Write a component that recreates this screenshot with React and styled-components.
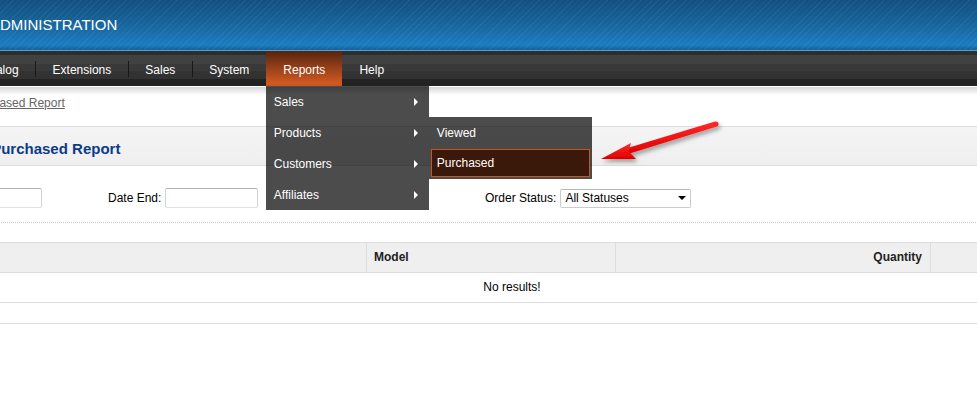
import React from "react";
import styled, { createGlobalStyle } from "styled-components";

const GlobalStyle = createGlobalStyle`
  html, body {
    margin: 0;
    padding: 0;
    background: #fff;
    overflow: hidden;
  }
  body {
    font-family: "Liberation Sans", Arial, sans-serif;
    font-size: 12px;
    color: #000;
  }
`;

const Screen = styled.div`
  position: relative;
  width: 977px;
  height: 399px;
  overflow: hidden;
`;

/* the admin page is wider than the window and scrolled a bit to the right */
const Page = styled.div`
  width: 1304px;
  margin-left: -140px;
`;

const Header = styled.header`
  height: 51px;
  padding: 0 0 1px 130px;
  box-sizing: border-box;
  display: flex;
  align-items: center;
  background:
    repeating-linear-gradient(135deg, rgba(255, 255, 255, 0.05) 0 1px, transparent 1px 4px),
    linear-gradient(to bottom, #13507f 0%, #166399 45%, #1a78b9 82%, #1a7cbf 90%, #135f98 100%);
  border-bottom: 1px solid #5c9dd0;
`;

const Logo = styled.div`
  color: #fff;
  font-size: 15px;
`;

const Menu = styled.ul`
  display: flex;
  margin: 0;
  padding: 0 0 0 8px;
  list-style: none;
  height: 35px;
  background: linear-gradient(
    to bottom,
    #2d2d2d 0,
    #2d2d2d 4px,
    #414141 4px,
    #414141 13px,
    #393939 13px,
    #393939 20px,
    #323232 20px,
    #323232 28px,
    #222 28px
  );
  border-bottom: 1px solid #fff;
`;

const MenuItem = styled.li`
  position: relative;
  display: flex;
  align-items: center;
  padding: 2px 16.5px 0;
  color: #fff;
  font-size: 12px;
  background: ${(p) =>
    p.$active
      ? "linear-gradient(to bottom, #55250b 0%, #7f3617 30%, #b04b1c 68%, #d15a21 92%, #c4541e 100%)"
      : "transparent"};

  & + & {
    padding-left: 17.5px;
  }
  & + &:not([data-active]) {
    background: linear-gradient(#181818, #181818) left 55% / 1px 16px no-repeat;
  }
`;

const Dropdown = styled.ul`
  position: absolute;
  top: 100%;
  left: 0;
  width: 163px;
  margin: 0;
  padding: 0;
  list-style: none;
  background: rgba(0, 0, 0, 0.7);
  z-index: 10;
`;

const DropItem = styled.li`
  position: relative;
  height: 31px;
  padding: 0 8px;
  box-sizing: border-box;
  display: flex;
  align-items: center;
  justify-content: space-between;
  color: #fff;
`;

const Caret = styled.span`
  width: 0;
  height: 0;
  margin-right: 3px;
  border-left: 4px solid #fff;
  border-top: 4px solid transparent;
  border-bottom: 4px solid transparent;
`;

const SubMenu = styled.ul`
  position: absolute;
  top: 0;
  left: 100%;
  width: 163px;
  margin: 0;
  padding: 0;
  list-style: none;
  background: rgba(0, 0, 0, 0.7);
`;

const SubItem = styled.li`
  display: flex;
  align-items: center;
  box-sizing: border-box;
  color: #fff;
  height: ${(p) => (p.$active ? "28px" : "31px")};
  margin: ${(p) => (p.$active ? "1px 2px 2px" : "0")};
  padding: ${(p) => (p.$active ? "0 5px" : "0 8px")};
  border: ${(p) => (p.$active ? "1px solid #c4571f" : "none")};
  background: ${(p) => (p.$active ? "#3b190a" : "transparent")};
`;

const Main = styled.div`
  padding: 0 10px;
  background: linear-gradient(to bottom, #d6d6d6 0, #fff 8px) no-repeat;
`;

const Breadcrumb = styled.div`
  padding: 9px 0 16px 2px;
  line-height: 14px;

  a {
    color: #666;
    text-decoration: underline;
  }
`;

const HeadingBox = styled.div`
  height: 40px;
  box-sizing: border-box;
  display: flex;
  align-items: center;
  padding: 4px 0 0 52px;
  border-top: 1px solid #dddddd;
  border-bottom: 1px solid #dddddd;
  background: linear-gradient(to bottom, #f4f4f4, #efefef);
`;

const Title = styled.h1`
  margin: 0;
  font-size: 15px;
  font-weight: bold;
  color: #0b3b89;
`;

const FilterRow = styled.div`
  display: grid;
  grid-template-columns: 220px 377px 1fr auto;
  align-items: center;
  padding: 22px 0 14px 18px;
  border-bottom: 1px dotted #cccccc;
`;

const Field = styled.label`
  display: flex;
  align-items: center;
  gap: 4px;
  white-space: nowrap;
`;

const TextInput = styled.input`
  width: 93px;
  height: 20px;
  box-sizing: border-box;
  margin: 0;
  padding: 1px 3px;
  border: 1px solid #d3d3d3;
  border-top-color: #b2b2b2;
  border-bottom-color: #dde3ea;
  border-radius: 2px;
  font: inherit;
`;

const SelectBox = styled.span`
  display: flex;
  align-items: center;
  width: 131px;
  height: 19px;
  box-sizing: border-box;
  border: 1px solid #cccccc;
  border-top-color: #b8b8b8;
  border-radius: 2px;
  background: #fff;
`;

const Select = styled.select`
  flex: 1;
  appearance: none;
  border: none;
  outline: none;
  background: transparent;
  margin: 0;
  padding: 0 0 0 4px;
  font: inherit;
  color: #000;
`;

const SelectArrow = styled.span`
  width: 0;
  height: 0;
  margin-right: 4px;
  border-top: 4px solid #000;
  border-left: 4px solid transparent;
  border-right: 4px solid transparent;
`;

const List = styled.div`
  display: grid;
  grid-template-columns: 496px 249px 315px 1fr;
  margin-top: 19px;
  margin-bottom: 20px;
  border-top: 1px solid #dddddd;
  border-left: 1px solid #dddddd;
`;

const HeadCell = styled.div`
  height: 30px;
  box-sizing: border-box;
  line-height: 29px;
  padding: ${(p) => (p.$align === "right" ? "0 8px 0 7px" : "0 7px")};
  text-align: ${(p) => p.$align || "left"};
  background: #efefef;
  border-right: 1px solid #dddddd;
  border-bottom: 1px solid #dddddd;
  font-weight: bold;
  color: #222;
`;

const EmptyCell = styled.div`
  grid-column: 1 / -1;
  height: 30px;
  box-sizing: border-box;
  line-height: 29px;
  text-align: center;
  border-right: 1px solid #dddddd;
  border-bottom: 1px solid #dddddd;
`;

const Pagination = styled.div`
  border-top: 1px solid #dddddd;
  height: 76px;
`;

const Pointer = styled.svg`
  position: absolute;
  left: 590px;
  top: 110px;
  z-index: 20;
`;

const RedArrow = () => (
  <Pointer width="140" height="60" viewBox="0 0 140 60">
    <defs>
      <filter id="arrowShadow" x="-20%" y="-40%" width="140%" height="180%">
        <feDropShadow dx="2" dy="3" stdDeviation="2" floodColor="#000" floodOpacity="0.35" />
      </filter>
      <linearGradient id="arrowFill" x1="0" y1="0" x2="0" y2="1">
        <stop offset="0" stopColor="#ff2a2a" />
        <stop offset="1" stopColor="#e00000" />
      </linearGradient>
    </defs>
    <g filter="url(#arrowShadow)" fill="url(#arrowFill)" stroke="none">
      <path d="M36 38.5 L125 11.5 Q128 11 128.6 13.6 Q129 16 126.2 16.8 L38 44 Z" />
      <path d="M11 49 L41 33 L38.5 41 L46 49 Z" />
    </g>
  </Pointer>
);

const topMenu = ["Dashboard", "Catalog", "Extensions", "Sales", "System", "Reports", "Help"];
const reportGroups = ["Sales", "Products", "Customers", "Affiliates"];

const App = () => {
  return (
    <Screen>
      <GlobalStyle />
      <Page>
        <Header>
          <Logo>ADMINISTRATION</Logo>
        </Header>

        <Menu>
          {topMenu.map((item) =>
            item === "Reports" ? (
              <MenuItem key={item} $active data-active="true">
                {item}
                <Dropdown>
                  {reportGroups.map((group) => (
                    <DropItem key={group}>
                      {group}
                      <Caret />
                      {group === "Products" && (
                        <SubMenu>
                          <SubItem>Viewed</SubItem>
                          <SubItem $active>Purchased</SubItem>
                        </SubMenu>
                      )}
                    </DropItem>
                  ))}
                </Dropdown>
              </MenuItem>
            ) : (
              <MenuItem key={item}>{item}</MenuItem>
            )
          )}
        </Menu>

        <Main>
          <Breadcrumb>
            <a href="#">Home</a> :: <a href="#">Products Purchased Report</a>
          </Breadcrumb>

          <HeadingBox>
            <Title>Products Purchased Report</Title>
          </HeadingBox>

          <FilterRow>
            <Field>
              Date Start: <TextInput type="text" />
            </Field>
            <Field>
              Date End: <TextInput type="text" />
            </Field>
            <Field>
              Order Status:
              <SelectBox>
                <Select defaultValue="0">
                  <option value="0">All Statuses</option>
                </Select>
                <SelectArrow />
              </SelectBox>
            </Field>
            <div />
          </FilterRow>

          <List>
            <HeadCell>Product Name</HeadCell>
            <HeadCell>Model</HeadCell>
            <HeadCell $align="right">Quantity</HeadCell>
            <HeadCell $align="right">Total</HeadCell>
            <EmptyCell>No results!</EmptyCell>
          </List>

          <Pagination />
        </Main>
      </Page>
      <RedArrow />
    </Screen>
  );
};

export default App;
